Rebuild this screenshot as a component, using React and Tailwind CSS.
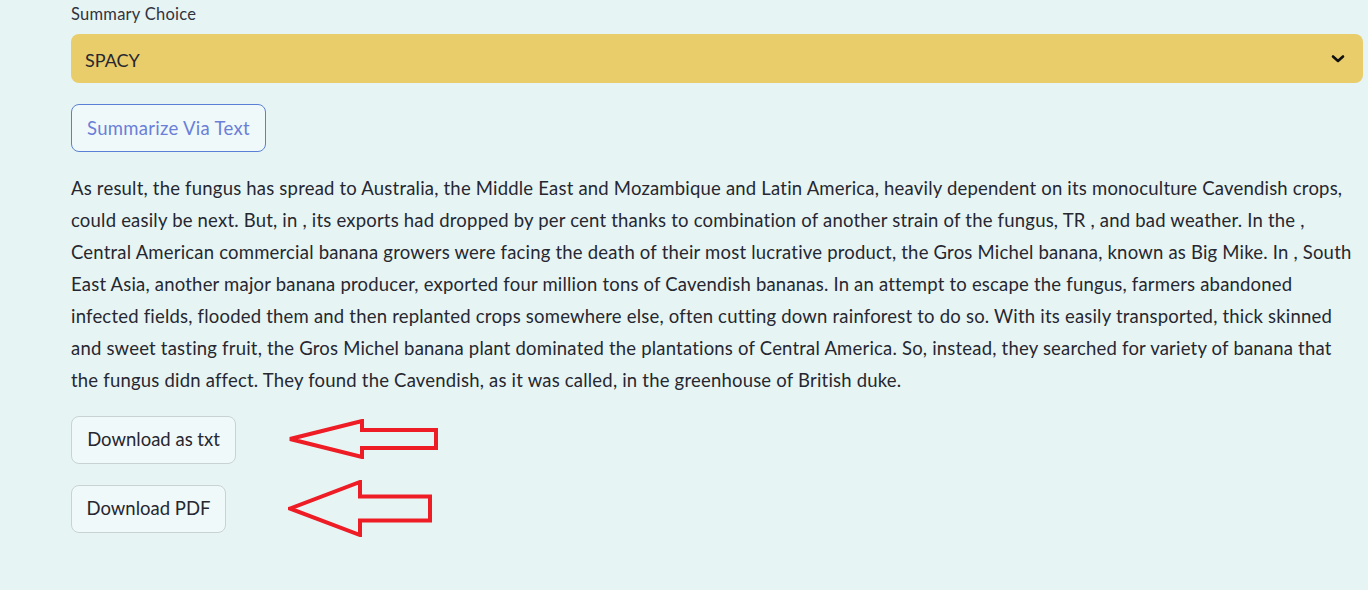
import React from "react";

const lines = [
  "As result, the fungus has spread to Australia, the Middle East and Mozambique and Latin America, heavily dependent on its monoculture Cavendish crops,",
  "could easily be next. But, in , its exports had dropped by per cent thanks to combination of another strain of the fungus, TR , and bad weather. In the ,",
  "Central American commercial banana growers were facing the death of their most lucrative product, the Gros Michel banana, known as Big Mike. In , South",
  "East Asia, another major banana producer, exported four million tons of Cavendish bananas. In an attempt to escape the fungus, farmers abandoned",
  "infected fields, flooded them and then replanted crops somewhere else, often cutting down rainforest to do so. With its easily transported, thick skinned",
  "and sweet tasting fruit, the Gros Michel banana plant dominated the plantations of Central America. So, instead, they searched for variety of banana that",
  "the fungus didn affect. They found the Cavendish, as it was called, in the greenhouse of British duke.",
];

function Arrow({ w, h, headW, shaftH }) {
  const cy = h / 2;
  const s = 2;
  const pts = [
    [s, cy],
    [headW, s],
    [headW, cy - shaftH / 2],
    [w - s, cy - shaftH / 2],
    [w - s, cy + shaftH / 2],
    [headW, cy + shaftH / 2],
    [headW, h - s],
  ]
    .map((p) => p.join(","))
    .join(" ");
  return (
    <svg width={w} height={h} viewBox={`0 0 ${w} ${h}`}>
      <polygon points={pts} fill="none" stroke="#ee1c25" strokeWidth="4" strokeLinejoin="miter" />
    </svg>
  );
}

export default function App() {
  return (
    <div
      className="w-[1368px] h-[590px] bg-[#e6f5f4] overflow-hidden text-[#262730]"
      style={{ fontFamily: "Lato, 'Noto Sans', sans-serif" }}
    >
      <div className="pl-[71px] pr-[5px] pt-[4px]">
        <div className="text-[16.5px] tracking-[0.25px] leading-[20px] h-[20px] text-[#31333f]">Summary Choice</div>
        <div className="mt-[10px] h-[49px] rounded-[8px] bg-[#e8cd6a] flex items-center justify-between pl-[14px] pr-[18px]">
          <span className="text-[18px] pt-[3px] text-[#262730]">SPACY</span>
          <svg width="14" height="10" viewBox="0 0 14 10">
            <path d="M2 2.5 L7 7 L12 2.5" fill="none" stroke="#111" strokeWidth="2.6" strokeLinecap="round" strokeLinejoin="round" />
          </svg>
        </div>
        <div className="mt-[21px] w-[195px] h-[48px] rounded-[8px] border border-[#5b7fd4] bg-[#f0f9f9] flex items-center justify-center pt-[1px] text-[18.5px] tracking-[0.3px] text-[#6a7fd8]">
          Summarize Via Text
        </div>
        <div className="mt-[20px] text-[18.5px] tracking-[0.2px] leading-[32px] text-[#262730]">
          {lines.map((l, i) => (
            <div key={i} className="whitespace-nowrap">
              {l}
            </div>
          ))}
        </div>
        <div className="mt-[20px] flex items-center gap-[52px]">
          <div className="w-[165px] h-[48px] rounded-[8px] border border-[#c9d2d2] bg-[#f0f9f9] flex items-center justify-center text-[18.5px]">
            Download as txt
          </div>
          <div className="-mt-[2px]">
            <Arrow w={150} h={40} headW={74} shaftH={18} />
          </div>
        </div>
        <div className="mt-[16px] flex items-center gap-[62px]">
          <div className="w-[155px] h-[48px] rounded-[8px] border border-[#c9d2d2] bg-[#f0f9f9] flex items-center justify-center text-[18.5px]">
            Download PDF
          </div>
          <Arrow w={144} h={57} headW={72} shaftH={24} />
        </div>
      </div>
    </div>
  );
}
